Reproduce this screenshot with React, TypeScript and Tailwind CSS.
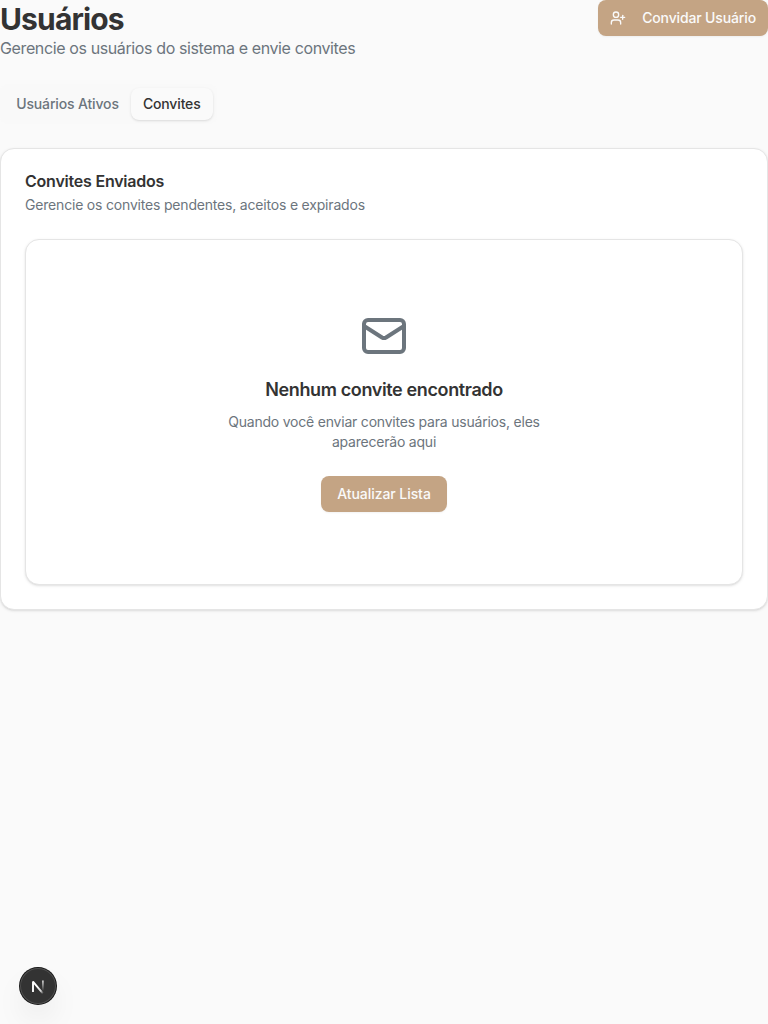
import { Mail, UserPlus } from "lucide-react";

function Header() {
  return (
    <header className="flex h-[60px] items-start justify-between">
      <div>
        <h1 className="h-9 text-[30px] leading-[38px] font-bold tracking-[-0.85px] text-[#333333]">Usuários</h1>
        <p className="text-base leading-6 tracking-[-0.38px] text-[#6c757d]">Gerencie os usuários do sistema e envie convites</p>
      </div>
      <button className="flex h-9 w-[170px] items-center justify-between rounded-lg bg-[#c4a484] px-3 text-sm font-medium tracking-[-0.14px] text-[#fafafa] shadow-xs">
        <UserPlus className="size-4" strokeWidth={2} />
        <span className="whitespace-nowrap">Convidar Usuário</span>
      </button>
    </header>
  );
}

function Tabs() {
  return (
    <div className="mt-6 flex h-10 w-[217px] items-center rounded-lg bg-[#f9f9f9] p-1 text-sm font-medium tracking-[-0.15px]">
      <button className="h-8 w-[127px] rounded-lg whitespace-nowrap text-[#6c757d]">Usuários Ativos</button>
      <button className="h-8 w-[81.5px] rounded-lg bg-[#fafafa] whitespace-nowrap text-[#333333] shadow-sm">Convites</button>
    </div>
  );
}

function EmptyState() {
  return (
    <div className="mt-6 flex h-[346px] flex-col items-center rounded-[14px] border border-[#e5e5e5] bg-white pt-[72px] shadow-sm">
      <Mail className="size-12 text-[#6c757d]" />
      <h3 className="mt-4 text-lg leading-7 font-semibold tracking-[-0.37px] text-[#333333]">Nenhum convite encontrado</h3>
      <p className="mt-2 w-[336px] text-center text-sm leading-5 tracking-[-0.21px] text-[#6c757d]">
        Quando você enviar convites para usuários, eles
        <br />
        aparecerão aqui
      </p>
      <button className="mt-6 h-9 w-[126px] rounded-lg bg-[#c4a484] text-sm font-medium tracking-[-0.06px] whitespace-nowrap text-[#fafafa] shadow-xs">
        Atualizar Lista
      </button>
    </div>
  );
}

function DevBadge() {
  return (
    <div className="fixed bottom-5 left-5 flex size-9 items-center justify-center rounded-full bg-[#333333] shadow-[0_0_0_1px_#171717,inset_0_0_0_1px_rgba(255,255,255,0.14),0_16px_32px_-8px_rgba(0,0,0,0.18)]">
      <svg width="40" height="40" viewBox="0 0 40 40" fill="none" className="shrink-0">
        <defs>
          <linearGradient id="diagonal" x1="20" y1="20" x2="26" y2="27" gradientUnits="userSpaceOnUse">
            <stop stopColor="white" />
            <stop offset="0.6" stopColor="white" stopOpacity="0.8" />
            <stop offset="1" stopColor="white" stopOpacity="0" />
          </linearGradient>
          <linearGradient id="stem" x1="25" y1="14" x2="25" y2="25" gradientUnits="userSpaceOnUse">
            <stop stopColor="white" stopOpacity="0.8" />
            <stop offset="1" stopColor="white" stopOpacity="0" />
          </linearGradient>
        </defs>
        <path d="M15 26V15.6L25 27.6" stroke="url(#diagonal)" strokeWidth="1.9" strokeLinejoin="bevel" />
        <path d="M24.9 14.6V25" stroke="url(#stem)" strokeWidth="1.8" />
      </svg>
    </div>
  );
}

export default function App() {
  return (
    <main className="min-h-screen bg-[#fafafa] font-['Inter',sans-serif]">
      <Header />
      <Tabs />
      <section className="mt-6 h-[462px] rounded-[14px] border border-[#e5e5e5] bg-white px-6 pt-6 shadow-sm">
        <h2 className="h-4 text-base leading-4 font-semibold tracking-[-0.22px] text-[#333333]">Convites Enviados</h2>
        <p className="mt-1.5 text-sm leading-5 tracking-[-0.19px] text-[#6c757d]">Gerencie os convites pendentes, aceitos e expirados</p>
        <EmptyState />
      </section>
      <DevBadge />
    </main>
  );
}
